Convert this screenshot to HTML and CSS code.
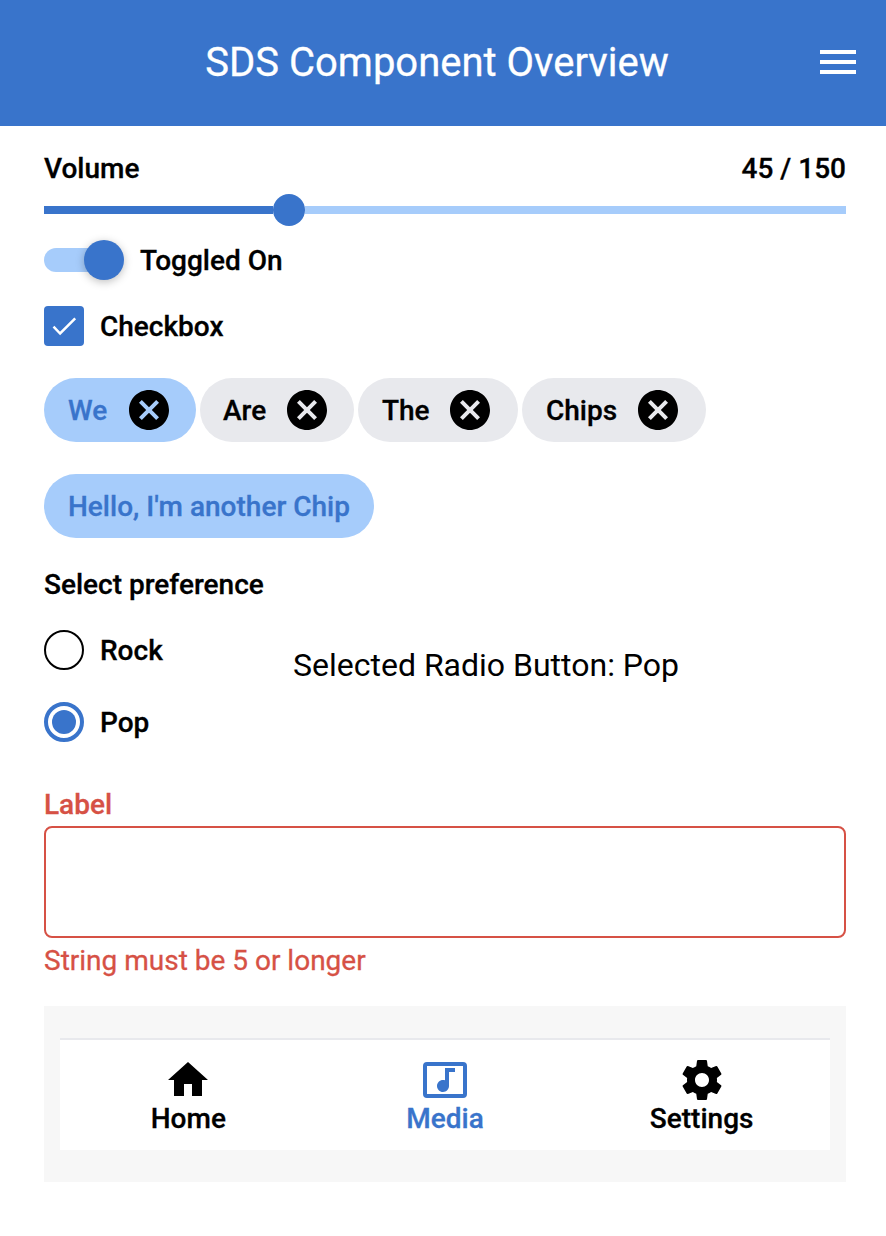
FILE: index.html
```html
<!DOCTYPE html>
<html lang="en">
<head>
<meta charset="utf-8">
<title>SDS Component Overview</title>
<link rel="stylesheet" href="styles.css">
</head>
<body>
<header class="appbar">
  <h1 class="title">SDS Component Overview</h1>
  <svg class="menu" viewBox="0 0 24 24" width="48" height="48"><path d="M3 18h18v-2H3v2zm0-5h18v-2H3v2zm0-7v2h18V6H3z"/></svg>
</header>
<main class="content">
  <div class="slider-labels"><span class="text">Volume</span><span class="text">45 / 150</span></div>
  <div class="slider"><div class="fill"></div><div class="thumb"></div><div class="rest"></div></div>
  <div class="toggle-row"><span class="switch"><span class="knob"></span></span><span class="text">Toggled On</span></div>
  <div class="check-row"><span class="checkbox"><svg viewBox="0 0 40 40" width="40" height="40"><path d="M9.500 20.700l6.600 6.800L31.200 12.400" fill="none" stroke="#fff" stroke-width="2.500"/></svg></span><span class="text">Checkbox</span></div>
  <div class="chips">
    <div class="chip active c1"><span class="text">We</span><svg viewBox="0 0 24 24" width="48" height="48"><path d="M12 2C6.470 2 2 6.470 2 12s4.470 10 10 10 10-4.470 10-10S17.530 2 12 2zm5 13.590L15.590 17 12 13.410 8.410 17 7 15.590 10.590 12 7 8.410 8.410 7 12 10.590 15.590 7 17 8.410 13.410 12 17 15.590z"/></svg></div>
    <div class="chip c2"><span class="text">Are</span><svg viewBox="0 0 24 24" width="48" height="48"><path d="M12 2C6.470 2 2 6.470 2 12s4.470 10 10 10 10-4.470 10-10S17.530 2 12 2zm5 13.590L15.590 17 12 13.410 8.410 17 7 15.590 10.590 12 7 8.410 8.410 7 12 10.590 15.590 7 17 8.410 13.410 12 17 15.590z"/></svg></div>
    <div class="chip c3"><span class="text">The</span><svg viewBox="0 0 24 24" width="48" height="48"><path d="M12 2C6.470 2 2 6.470 2 12s4.470 10 10 10 10-4.470 10-10S17.530 2 12 2zm5 13.590L15.590 17 12 13.410 8.410 17 7 15.590 10.590 12 7 8.410 8.410 7 12 10.590 15.590 7 17 8.410 13.410 12 17 15.590z"/></svg></div>
    <div class="chip c4"><span class="text">Chips</span><svg viewBox="0 0 24 24" width="48" height="48"><path d="M12 2C6.470 2 2 6.470 2 12s4.470 10 10 10 10-4.470 10-10S17.530 2 12 2zm5 13.590L15.590 17 12 13.410 8.410 17 7 15.590 10.590 12 7 8.410 8.410 7 12 10.590 15.590 7 17 8.410 13.410 12 17 15.590z"/></svg></div>
  </div>
  <div class="chips second"><div class="chip active c5"><span class="text">Hello, I'm another Chip</span></div></div>
  <div class="pref-title">Select preference</div>
  <div class="pref">
    <div class="radios">
      <div class="radio-row"><span class="radio"></span><span class="text">Rock</span></div>
      <div class="radio-row"><span class="radio on"></span><span class="text">Pop</span></div>
    </div>
    <div class="selected">Selected Radio Button: Pop</div>
  </div>
  <label class="field-label" for="field">Label</label>
  <input class="field" id="field" type="text">
  <div class="error">String must be 5 or longer</div>
  <div class="panel">
    <nav class="nav">
      <div class="item"><svg viewBox="0 0 24 24" width="48" height="48"><path d="M10 20v-6h4v6h5v-8h3L12 3 2 12h3v8z"/></svg><span>Home</span></div>
      <div class="item current"><svg viewBox="0 0 48 48" width="48" height="48"><rect x="4" y="8" width="40" height="32" rx="2" fill="none" stroke="currentColor" stroke-width="4"/><path d="M16 30c0-3.320 2.680-6 6-6 .700 0 1.380.120 2 .340V12h10v4h-6v14.060c-.040 3.280-2.720 5.940-6 5.940-3.320 0-6-2.680-6-6z"/></svg><span>Media</span></div>
      <div class="item"><svg viewBox="0 0 24 24" width="48" height="48"><path d="M19.430 12.980c.040-.320.070-.640.070-.980s-.030-.660-.070-.980l2.110-1.650c.190-.150.240-.420.120-.640l-2-3.460c-.120-.220-.390-.300-.610-.220l-2.490 1c-.520-.400-1.080-.730-1.690-.980l-.380-2.650C14.460 2.180 14.250 2 14 2h-4c-.250 0-.460.180-.490.420l-.380 2.650c-.610.250-1.170.590-1.690.980l-2.490-1c-.230-.090-.490 0-.610.220l-2 3.460c-.130.220-.070.490.120.640l2.110 1.650c-.040.320-.070.650-.070.980s.030.660.070.980l-2.110 1.650c-.190.150-.240.420-.120.640l2 3.460c.120.220.390.300.610.220l2.490-1c.520.400 1.080.730 1.690.980l.380 2.650c.030.240.240.420.490.420h4c.250 0 .460-.180.490-.420l.380-2.650c.610-.250 1.170-.590 1.690-.980l2.490 1c.230.090.490 0 .610-.220l2-3.460c.120-.220.070-.490-.120-.640l-2.110-1.650zM12 15.500c-1.930 0-3.500-1.570-3.500-3.500s1.570-3.500 3.500-3.500 3.500 1.570 3.500 3.500-1.570 3.500-3.500 3.500z"/></svg><span>Settings</span></div>
    </nav>
  </div>
</main>
</body>
</html>
```
FILE: styles.css
```css
* { box-sizing: border-box; }
body { margin: 0; background: #fff; color: #000; font: 500 28px/42px Roboto, sans-serif; height: 1236px; overflow: hidden; -webkit-text-stroke: 0.3px currentColor; }
svg { display: block; flex: none; fill: currentColor; }
.appbar { height: 126px; background: #3974cb; color: #fff; display: flex; align-items: center; padding: 0 24px 2px 16px; }
.title { flex: 1; margin: 0; padding-left: 50px; padding-top: 2px; text-align: center; font-size: 40px; line-height: 48px; font-weight: 400; margin-right: 6px; }
.content { padding: 22px 40px 0 44px; }
.slider-labels { display: flex; justify-content: space-between; height: 40px; }
.slider-labels .text { padding-top: 0; }
.text { padding-top: 2px; }
.slider { display: flex; align-items: center; height: 32px; margin-top: 6px; }
.fill { width: 229px; height: 8px; background: #3974cb; }
.thumb { width: 32px; height: 32px; border-radius: 50%; background: #3974cb; }
.rest { flex: 1; height: 8px; background: #a6ccfb; }
.toggle-row { display: flex; align-items: center; gap: 16px; height: 40px; margin-top: 14px; }
.switch { width: 80px; height: 24px; border-radius: 12px; background: linear-gradient(90deg, #a6ccfb 60px, transparent 60px); display: flex; align-items: center; justify-content: flex-end; }
.knob { width: 40px; height: 40px; flex: none; border-radius: 50%; background: #3974cb; box-shadow: 0 2px 8px rgba(0,0,0,.25); }
.check-row { display: flex; align-items: center; gap: 16px; margin-top: 26px; height: 40px; }
.checkbox { width: 40px; height: 40px; border-radius: 4px; background: #3974cb; }
.chips { display: flex; gap: 4px; margin-top: 32px; }
.chip { height: 64px; border-radius: 32px; background: #e8e9ed; display: flex; align-items: center; justify-content: space-between; padding: 0 23px 0 24px; white-space: nowrap; }
.chip.active { background: #a6ccfb; }
.chip.active span { color: #3974cb; }
.c1 { width: 152px; } .c2 { width: 154px; padding-left: 23px; } .c3 { width: 160px; padding-right: 24px; } .c4 { width: 184px; padding-right: 24px; } .c5 { width: 330px; }
.second { margin-top: 32px; }
.pref-title { margin-top: 26px; height: 40px; }
.pref { display: flex; margin-top: 26px; }
.radios { display: flex; flex-direction: column; gap: 32px; width: 249px; }
.radio-row { display: flex; gap: 16px; align-items: center; height: 40px; }
.radio { width: 40px; height: 40px; border: 2px solid #000; border-radius: 50%; }
.radio.on { border: 4px solid #3974cb; background: #3974cb; background-clip: content-box; padding: 4px; }
.selected { font-size: 32px; font-weight: 400; line-height: 40px; margin-top: 15px; -webkit-text-stroke: 0; }
.field-label { display: block; color: #d65145; margin-top: 42px; height: 42px; }
.field { display: block; width: 100%; height: 112px; border: 2px solid #d65145; border-radius: 8px; background: #fff; outline: none; font: inherit; padding: 0 16px; }
.error { color: #d65145; font-weight: 400; margin-top: 2px; height: 40px; }
.panel { margin-top: 26px; height: 176px; background: #f7f7f7; padding: 32px 16px; }
.nav { height: 112px; border-top: 2px solid #e8e9ed; background: #fff; display: grid; grid-template-columns: repeat(3, 1fr); }
.item { display: flex; flex-direction: column; align-items: center; padding-top: 16px; }
.item span { line-height: 32px; margin-top: -1px; }
.current { color: #3974cb; }
```
